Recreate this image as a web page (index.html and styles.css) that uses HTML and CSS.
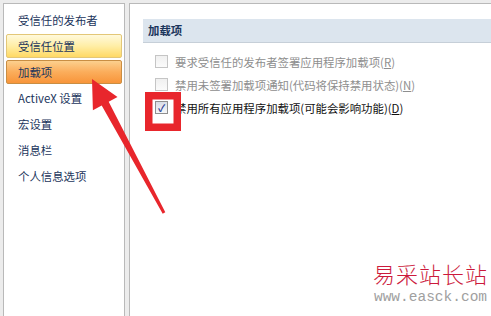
FILE: index.html
```html
<!DOCTYPE html>
<html lang="zh-CN">
<head>
    <meta charset="UTF-8">
    <title>信任中心 - 加载项</title>
    <link rel="stylesheet" href="styles.css">
</head>
<body>
    <div class="window">
        <ul class="nav">
            <li class="nav-item">受信任的发布者</li>
            <li class="nav-item hover">受信任位置</li>
            <li class="nav-item active">加载项</li>
            <li class="nav-item">ActiveX 设置</li>
            <li class="nav-item">宏设置</li>
            <li class="nav-item">消息栏</li>
            <li class="nav-item">个人信息选项</li>
        </ul>

        <div class="pane">
            <div class="section-title">加载项</div>
            <div class="options">
                <label class="option disabled">
                    <span class="box"></span>
                    <span>要求受信任的发布者签署应用程序加载项(<u>R</u>)</span>
                </label>
                <label class="option disabled">
                    <span class="box"></span>
                    <span>禁用未签署加载项通知(代码将保持禁用状态)(<u>N</u>)</span>
                </label>
                <label class="option">
                    <span class="box checked">&#10003;</span>
                    <span>禁用所有应用程序加载项(可能会影响功能)(<u>D</u>)</span>
                </label>
            </div>
        </div>
    </div>

    <!-- annotation drawn on top of the screenshot -->
    <svg class="marks" width="491" height="316" viewBox="0 0 491 316">
        <rect x="148.75" y="95.75" width="28.5" height="31.5" fill="none" stroke="#e8262c" stroke-width="7.5"/>
        <polygon fill="#e8262c" points="92,79 117.5,97 108.7,101.8 165.3,212.3 162.7,213.7 101.7,105.6 92.9,110.3"/>
    </svg>

    <div class="watermark">
        <div class="wm-name">易采站长站</div>
        <div class="wm-url">www.easck.com</div>
    </div>
</body>
</html>
```

FILE: styles.css
```css
body {
    margin: 0;
    width: 491px;
    height: 316px;
    overflow: hidden;
    background: #ececec;
    font-family: "Noto Sans CJK SC", "Liberation Sans", sans-serif;
    font-size: 11.4px;
    position: relative;
}
.window {
    display: flex;
    gap: 4px;
    padding: 3px 0 0 3px;
    height: 313px;
}
.nav {
    list-style: none;
    margin: 0;
    width: 116px;
    padding: 4px 2px 0;
    background: #fff;
    border: 1px solid #b9b9b9;
    border-bottom: none;
}
.nav-item {
    height: 22px;
    line-height: 22px;
    margin-bottom: 2px;
    padding-left: 11px;
    color: #1b355c;
    border: 1px solid transparent;
    border-radius: 2px;
    white-space: nowrap;
}
.nav-item.hover {
    background: linear-gradient(#fff9dc, #ffeea6 50%, #ffd964);
    border-color: #e3c777;
}
.nav-item.active {
    background: linear-gradient(#fcd08e, #fbad5b 50%, #f8953a);
    border-color: #c98e43;
}
.pane {
    flex: 1;
    background: #fff;
    border: 1px solid #b9b9b9;
    border-right: none;
    border-bottom: none;
    padding: 15px 0 0 13px;
}
.section-title {
    height: 23px;
    line-height: 23px;
    padding-left: 5px;
    font-weight: bold;
    color: #1b355c;
    background: #dce5ee;
    border-bottom: 1px solid #c6cfd8;
}
.options {
    padding-top: 7px;
}
.option {
    display: flex;
    align-items: center;
    gap: 7px;
    height: 23px;
    padding-left: 12px;
    color: #111;
    white-space: nowrap;
}
.option.disabled {
    color: #8e8e8e;
}
.box {
    width: 11px;
    height: 11px;
    border: 1px solid #c5c5c5;
    background: linear-gradient(#f0f0f0, #fbfbfb);
    font-size: 10px;
    line-height: 11px;
    text-align: center;
    font-weight: bold;
    color: #2b3f96;
}
.box.checked {
    border-color: #8f8f8f;
    background: linear-gradient(#d8dde6, #f6f7f9);
}
.marks {
    position: absolute;
    left: 0;
    top: 0;
}
.watermark {
    position: absolute;
    left: 372px;
    top: 258px;
    width: 117px;
    text-align: center;
}
.wm-name {
    color: #cc1a3c;
    font-size: 22px;
    font-weight: 300;
    letter-spacing: 1px;
    line-height: 30px;
}
.wm-url {
    color: #a0a0a0;
    font-family: "Liberation Mono", monospace;
    font-size: 14.5px;
    line-height: 18px;
}
```
